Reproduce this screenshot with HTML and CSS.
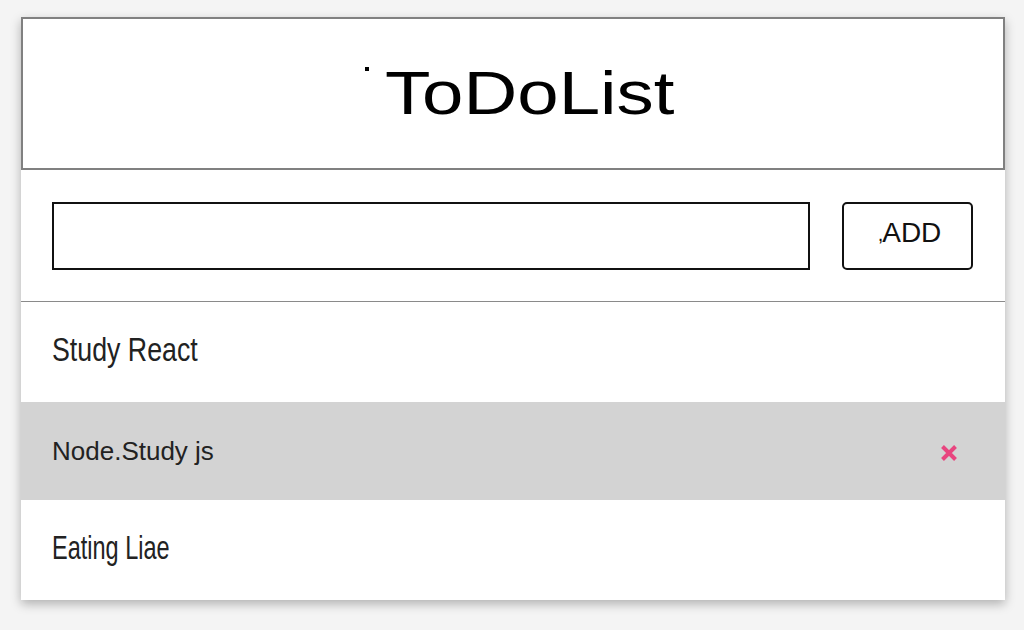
FILE: index.html
```html
<!DOCTYPE html>
<html lang="en">
<head>
<meta charset="utf-8">
<title>ToDoList</title>
<link rel="stylesheet" href="styles.css">
</head>
<body>
<main class="card">
  <header class="header">
    <h1 class="title"><span class="title-dot"></span><span class="title-text">ToDoList</span></h1>
  </header>
  <section class="entry">
    <input class="entry-input" type="text" aria-label="New todo">
    <button class="entry-btn" type="button"><span class="btn-mark">,</span>ADD</button>
  </section>
  <ul class="list">
    <li class="item"><span class="item-text tall tall-wide">Study React</span></li>
    <li class="item item-active"><span class="item-text">Node.Study js</span>
      <svg class="item-del" width="18" height="18" viewBox="0 0 18 18" aria-hidden="true">
        <path d="M2.5 2.5 L15.5 15.5 M15.5 2.5 L2.5 15.5" stroke="#e8457f" stroke-width="4" stroke-linecap="butt" fill="none"/>
      </svg>
    </li>
    <li class="item"><span class="item-text tall tall-narrow">Eating Liae</span></li>
  </ul>
</main>
</body>
</html>
```

FILE: styles.css
```css
html, body {
  margin: 0;
  padding: 0;
}

body {
  background: #f4f4f4;
  font-family: "Liberation Sans", Arial, sans-serif;
  padding: 17px 19px 0 21px;
  height: 630px;
  box-sizing: border-box;
}

.card {
  width: 984px;
  background: #ffffff;
  box-shadow: 0 4px 10px rgba(0, 0, 0, 0.28);
}

.header {
  height: 153px;
  box-sizing: border-box;
  border: 2px solid #808080;
  display: flex;
  align-items: center;
  justify-content: center;
}

.title {
  margin: 0;
  display: flex;
  align-items: center;
  padding-right: 12px;
  font-weight: normal;
  font-size: 61px;
  line-height: 1;
  color: #000;
}

.title-dot {
  width: 4px;
  height: 4px;
  background: #000;
  margin-right: 42px;
  margin-bottom: 50px;
}

.title-text {
  display: inline-block;
  transform: scaleX(1.22);
}

.entry {
  display: flex;
  gap: 32px;
  padding: 32px 32px 31px 31px;
  border-bottom: 1px solid #8a8a8a;
}

.entry-input {
  flex: 1;
  height: 68px;
  box-sizing: border-box;
  border: 2px solid #111;
  border-radius: 0;
  margin: 0;
  padding: 0 12px;
  font-family: "Liberation Sans", Arial, sans-serif;
  font-size: 24px;
  outline: none;
  background: #fff;
}

.entry-btn {
  width: 131px;
  height: 68px;
  box-sizing: border-box;
  border: 2px solid #111;
  border-radius: 5px;
  background: #fff;
  margin: 0;
  padding: 0 0 6px 4px;
  font-family: "Liberation Sans", Arial, sans-serif;
  font-size: 28px;
  color: #111;
  display: flex;
  align-items: center;
  justify-content: center;
  line-height: 1;
}

.btn-mark {
  margin-right: -1px;
  margin-top: 2px;
  font-size: 20px;
}

.list {
  list-style: none;
  margin: 0;
  padding: 0;
}

.item {
  height: 100px;
  box-sizing: border-box;
  display: flex;
  align-items: center;
  justify-content: space-between;
  padding: 0 47px 6px 31px;
  color: #222;
}

.item-active {
  background: #d3d3d3;
  height: 98px;
  padding-bottom: 1px;
}

.item-text {
  display: inline-block;
  font-size: 26px;
  line-height: 1;
}

.tall {
  font-size: 25px;
  transform-origin: left center;
}

.tall-wide {
  transform: scale(1.07, 1.33);
}

.tall-narrow {
  transform: scale(0.94, 1.33);
}

.item-del {
  display: block;
  margin-top: 5px;
}
```
